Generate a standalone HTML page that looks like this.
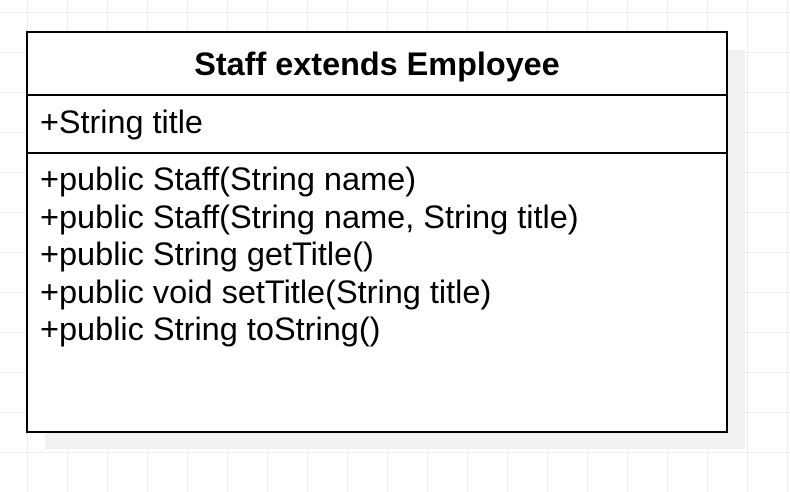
<!DOCTYPE html>
<html><head><style>
html,body{margin:0;padding:0;}
body{width:790px;height:492px;position:relative;overflow:hidden;background:#fff;
background-image:linear-gradient(to right,#efefef 1px,transparent 1px),linear-gradient(to bottom,#efefef 1px,transparent 1px);
background-size:40px 40px;background-position:27px 12px;font-family:"Liberation Sans",Arial,sans-serif;color:#000;}
.sh{position:absolute;left:45px;top:50px;width:700px;height:399px;background:#f1f1f1;}
.box{position:absolute;left:26px;top:31px;width:698px;height:398px;border:2px solid #000;background:#fff;}
.t{position:absolute;left:0;top:0;width:100%;height:61px;border-bottom:2px solid #000;text-align:center;font-weight:bold;font-size:32.4px;line-height:62px;}
.a{position:absolute;left:0;top:63px;width:100%;height:56px;border-bottom:2px solid #000;font-size:32.4px;line-height:52px;}
.a span{padding-left:12px;}
.m{position:absolute;left:12px;top:128px;font-size:32.5px;line-height:37.6px;white-space:pre;}
</style></head><body>
<div class="sh"></div>
<div class="box">
<div class="t">Staff extends Employee</div>
<div class="a"><span>+String title</span></div>
<div class="m">+public Staff(String name)
+public Staff(String name, String title)
+public String getTitle()
+public void setTitle(String title)
+public String toString()</div>
</div>
</body></html>
